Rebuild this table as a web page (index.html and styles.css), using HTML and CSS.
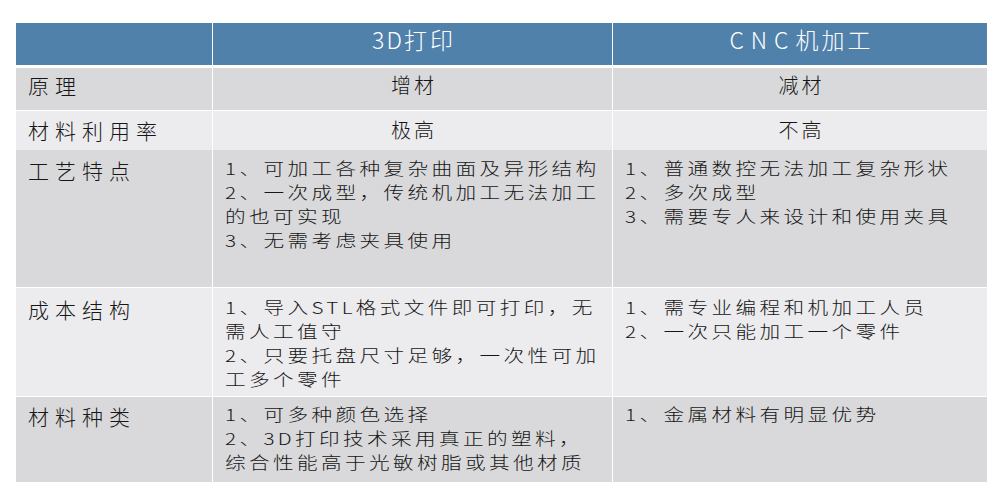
FILE: index.html
```html
<!DOCTYPE html>
<html lang="zh-CN">
<head>
<meta charset="utf-8">
<title>3D打印 vs CNC机加工</title>
<link rel="stylesheet" href="styles.css">
</head>
<body>
<div class="page">
  <div class="table">
    <div class="row head">
      <div class="cell"></div>
      <div class="cell htext"><span class="hlatin">3D</span>打印</div>
      <div class="cell htext"><span class="hwide">CNC</span>机加工</div>
    </div>
    <div class="row r1 dark gap3">
      <div class="cell label">原理</div>
      <div class="cell center">增材</div>
      <div class="cell center">减材</div>
    </div>
    <div class="row r2 light gap1">
      <div class="cell label">材料利用率</div>
      <div class="cell center">极高</div>
      <div class="cell center">不高</div>
    </div>
    <div class="row r3 dark">
      <div class="cell label">工艺特点</div>
      <div class="cell body"><div class="txt">1、可加工各种复杂曲面及异形结构<br>2、一次成型，传统机加工无法加工<br>的也可实现<br>3、无需考虑夹具使用</div></div>
      <div class="cell body"><div class="txt">1、普通数控无法加工复杂形状<br>2、多次成型<br>3、需要专人来设计和使用夹具</div></div>
    </div>
    <div class="row r4 light gap1">
      <div class="cell label">成本结构</div>
      <div class="cell body"><div class="txt">1、导入STL格式文件即可打印，无<br>需人工值守<br>2、只要托盘尺寸足够，一次性可加<br>工多个零件</div></div>
      <div class="cell body"><div class="txt">1、需专业编程和机加工人员<br>2、一次只能加工一个零件</div></div>
    </div>
    <div class="row r5 dark gap1">
      <div class="cell label">材料种类</div>
      <div class="cell body"><div class="txt">1、可多种颜色选择<br>2、3D打印技术采用真正的塑料，<br>综合性能高于光敏树脂或其他材质</div></div>
      <div class="cell body"><div class="txt">1、金属材料有明显优势</div></div>
    </div>
  </div>
</div>
</body>
</html>
```

FILE: styles.css
```css
html, body {
  margin: 0;
  padding: 0;
  background: #ffffff;
}

.page {
  padding: 23px 0 0 16px;
  font-family: "Noto Sans CJK SC", "Noto Sans", sans-serif;
  font-weight: 300;
  color: #161616;
}

.table {
  width: 971px;
  display: flex;
  flex-direction: column;
  background: #ffffff;
}

.row {
  display: grid;
  grid-template-columns: 196px 399px 374px;
  column-gap: 1px;
}

.gap3 { margin-top: 3px; }
.gap1 { margin-top: 1px; }

.head { height: 42px; }
.head .cell { background: #4f81ab; }

.dark .cell { background: #d9d9db; }
.light .cell { background: #ecebee; }

.cell {
  white-space: nowrap;
  overflow: hidden;
}

.htext {
  color: #ffffff;
  font-size: 23px;
  letter-spacing: 3px;
  line-height: 32px;
  text-align: center;
  padding-left: 3px;
}

.hlatin { letter-spacing: 2px; }
.hwide { letter-spacing: 7px; }

.label {
  font-size: 21px;
  letter-spacing: 6px;
  line-height: 24px;
  padding-left: 12px;
}

.center {
  font-size: 20px;
  letter-spacing: 3px;
  line-height: 24px;
  text-align: center;
  padding-left: 3px;
}

.body {
  padding-left: 12px;
}

.txt {
  font-size: 16.5px;
  letter-spacing: 2.7px;
  line-height: 24px;
  transform: scaleX(1.25);
  transform-origin: 0 0;
}

.r1 { height: 42px; }
.r1 .cell { padding-top: 5px; }

.r2 { height: 39px; }
.r2 .cell { padding-top: 7px; }

.r3 { height: 137px; }
.r3 .cell { padding-top: 6px; }
.r3 .label { padding-top: 8px; }

.r4 { height: 108px; }
.r4 .cell { padding-top: 7px; }
.r4 .label { padding-top: 9px; }

.r5 { height: 85px; }
.r5 .cell { padding-top: 5px; }
.r5 .label { padding-top: 7px; }
```
